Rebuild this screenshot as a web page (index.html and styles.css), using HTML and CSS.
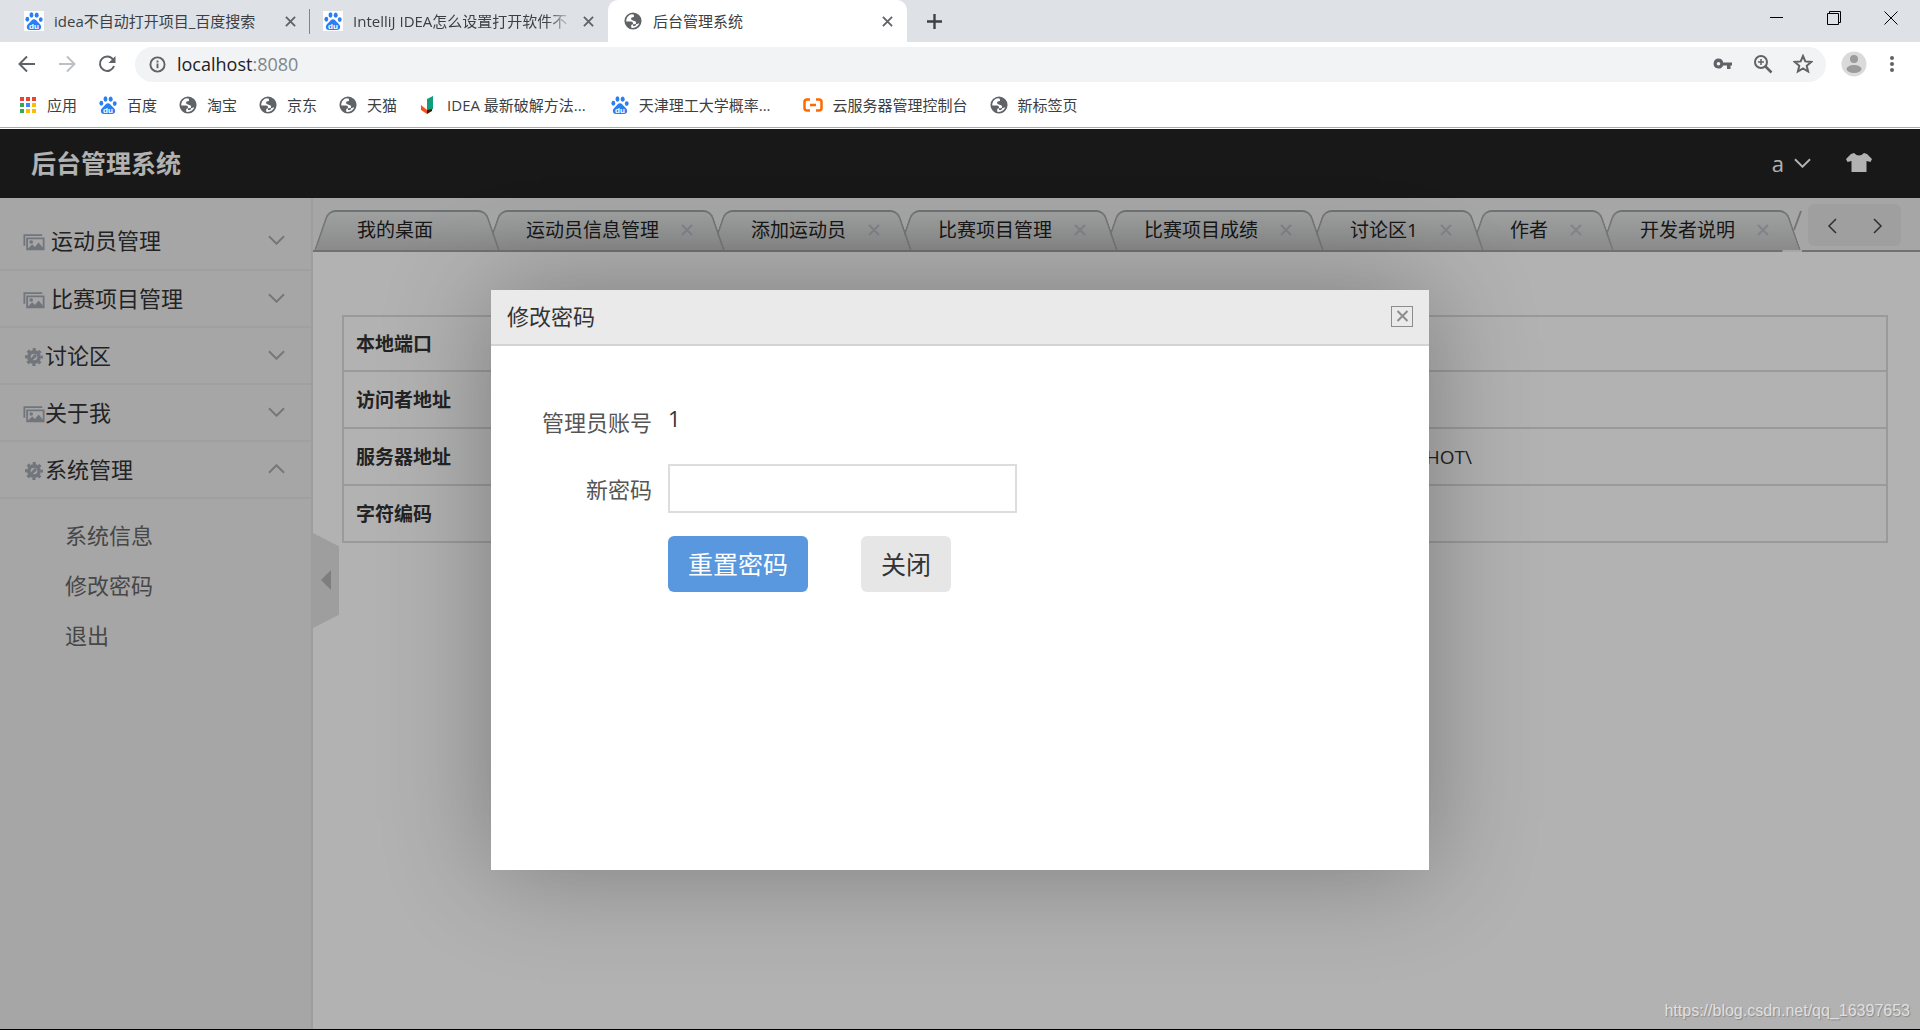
FILE: index.html
```html
<!DOCTYPE html>
<html lang="zh-CN">
<head>
<meta charset="utf-8">
<title>后台管理系统</title>
<link rel="stylesheet" href="styles.css">
</head>
<body>
<svg class="defs" width="0" height="0" aria-hidden="true">
  <symbol id="paw" viewBox="0 0 20 20">
    <g fill="#2b7ff5">
      <ellipse cx="7.2" cy="3.4" rx="2.2" ry="3"/><ellipse cx="13" cy="3.5" rx="2.2" ry="3"/>
      <ellipse cx="2.6" cy="8" rx="2.1" ry="2.7"/><ellipse cx="17.5" cy="8.4" rx="2.1" ry="2.7"/>
      <path d="M10 8c2 0 3 1.6 4.2 3 1.500 1.700 3.800 2.900 3.800 5.500 0 2.400-1.600 3.500-3.600 3.500H5.600C3.600 20 2 18.900 2 16.500c0-2.600 2.300-3.800 3.800-5.500C7 9.600 8 8 10 8z"/>
    </g>
    <text x="10" y="18.500" text-anchor="middle" class="paw-text">du</text>
  </symbol>
  <symbol id="globe" viewBox="0 0 20 20">
    <circle cx="10" cy="10" r="9.500" fill="#5f6368"/>
    <path d="M9 2.500 C4.500 3 2.300 7 2.500 10.500 H8 a2 2 0 0 1 2 2 v1 h2 a1.500 1.500 0 0 0 1.500-1.500 c0-2-2-1.500-3.500-2.500 C8 8.500 7 7.500 8.500 6 l2.500-.5 V3z" fill="#fff"/>
    <path d="M10 13.500 l-2 1 v3 c4 .8 8-1.500 9-5 l-3.500 1 -1 2h-2.500z" fill="#fff"/>
  </symbol>
  <symbol id="cross" viewBox="0 0 12 12"><path d="M1 1 11 11M11 1 1 11" fill="none" stroke="currentColor" stroke-width="2"/></symbol>
  <symbol id="chevron" viewBox="0 0 18 10"><path d="M1 1 9 9 17 1" fill="none" stroke="currentColor" stroke-width="2"/></symbol>
  <symbol id="side" viewBox="0 0 10 16"><path d="M9 1 2 8 9 15" fill="none" stroke="currentColor" stroke-width="1.500"/></symbol>
  <symbol id="pictures" viewBox="0 0 24 18">
    <path d="M1.500 13V1.500H21M4.500 5h18v12h-18z" fill="none" stroke="#a3a9b3" stroke-width="2"/>
    <path d="M5 16.500l5-5 3 3 4-5 5 6v1.500z" fill="#a3a9b3"/><circle cx="9" cy="9" r="2" fill="#a3a9b3"/>
  </symbol>
  <symbol id="gear" viewBox="0 0 20 20">
    <circle cx="10" cy="10" r="5.700" fill="none" stroke="#a3a9b3" stroke-width="4"/>
    <circle cx="10" cy="10" r="8.500" fill="none" stroke="#a3a9b3" stroke-width="3" stroke-dasharray="3.500 3.176" stroke-dashoffset="1.750"/>
    <path d="M6 14l4-4" stroke="#a3a9b3" stroke-width="3"/><circle cx="11" cy="9" r="2" fill="#a3a9b3"/>
  </symbol>
</svg>

<div class="browser">
  <div class="window-tabs">
    <div class="window-tab first"><svg class="fav boxed"><use href="#paw"/></svg><span class="tab-title">idea不自动打开项目_百度搜索</span><button class="tab-x" aria-label="关闭标签页"><svg><use href="#cross"/></svg></button></div>
    <div class="window-tab second"><svg class="fav boxed"><use href="#paw"/></svg><span class="tab-title fade">IntelliJ IDEA怎么设置打开软件不</span><button class="tab-x" aria-label="关闭标签页"><svg><use href="#cross"/></svg></button></div>
    <div class="window-tab current"><svg class="fav"><use href="#globe"/></svg><span class="tab-title">后台管理系统</span><button class="tab-x" aria-label="关闭标签页"><svg><use href="#cross"/></svg></button></div>
    <button class="new-tab" aria-label="新标签页"><svg viewBox="0 0 16 16"><path d="M8 0V16M0 8H16" stroke="#3c4043" stroke-width="2.500"/></svg></button>
    <div class="window-controls">
      <button aria-label="最小化"><svg viewBox="0 0 14 14"><path d="M0 6.500H13" stroke="#000"/></svg></button>
      <button aria-label="还原"><svg viewBox="0 0 14 14"><path d="M.5 2.500h11v11H.5zM2.500 2.500V.5h11v11h-2" fill="none" stroke="#000"/></svg></button>
      <button aria-label="关闭"><svg viewBox="0 0 14 14"><path d="M.5.5 13.500 13.500M13.500.5.5 13.500" stroke="#000"/></svg></button>
    </div>
  </div>
  <div class="toolbar">
    <button aria-label="后退"><svg viewBox="0 0 18 18"><path d="M17 9H2M9 1.500 1.500 9 9 16.500" fill="none" stroke="#5f6368" stroke-width="2"/></svg></button>
    <button aria-label="前进"><svg viewBox="0 0 18 18"><path d="M1 9H16M9 1.500 16.500 9 9 16.500" fill="none" stroke="#bdc1c6" stroke-width="2"/></svg></button>
    <button aria-label="刷新"><svg viewBox="0 0 18 18"><path d="M15 4.500A7.200 7.200 0 1 0 16 11" fill="none" stroke="#5f6368" stroke-width="2"/><path d="M17.500 1v7h-7z" fill="#5f6368"/></svg></button>
    <div class="address">
      <svg class="info" viewBox="0 0 18 18"><circle cx="9" cy="9" r="7.500" fill="none" stroke="#5f6368" stroke-width="2"/><path d="M9 8v5M9 4.800v2" stroke="#5f6368" stroke-width="2"/></svg>
      <span class="url">localhost<span class="port">:8080</span></span>
      <svg class="tool" viewBox="0 0 20 20"><path d="M5.500 4.500a5 5 0 1 0 4.700 7H14V15h3.500v-3.500H19v-3h-8.800a5 5 0 0 0-4.700-4z" fill="#5f6368"/><circle cx="5.500" cy="9.700" r="1.800" fill="#f1f3f4"/></svg>
      <svg class="tool" viewBox="0 0 20 20"><circle cx="8" cy="8" r="6" fill="none" stroke="#5f6368" stroke-width="2"/><path d="M12.500 12.500 18.500 18.500" stroke="#5f6368" stroke-width="2.500"/><path d="M8 5v6M5 8h6" stroke="#5f6368" stroke-width="1.500"/></svg>
      <svg class="tool" viewBox="0 0 20 20"><path d="M10 2l2.300 5.400 5.900.5-4.500 3.900 1.400 5.700-5.100-3-5.100 3 1.400-5.700-4.500-3.900 5.900-.5z" fill="none" stroke="#5f6368" stroke-width="2"/></svg>
    </div>
    <svg class="avatar" viewBox="0 0 26 26"><circle cx="13" cy="13" r="12.500" fill="#dadada"/><circle cx="13" cy="8" r="4" fill="#9b9b9b"/><ellipse cx="13" cy="18" rx="7.500" ry="4" fill="#9b9b9b"/></svg>
    <svg class="dots" viewBox="0 0 6 18"><g fill="#5f6368"><circle cx="3" cy="3" r="2"/><circle cx="3" cy="9" r="2"/><circle cx="3" cy="15" r="2"/></g></svg>
  </div>
  <nav class="bookmarks">
    <a href="#"><svg class="bm" viewBox="0 0 18 18"><g><path fill="#ea4335" d="M1 1h4v4H1zM7 1h4v4H7zM13 1h4v4h-4z"/><path fill="#34a853" d="M1 7h4v4H1zM1 13h4v4H1z"/><path fill="#4285f4" d="M7 7h4v4H7z"/><path fill="#fbbc04" d="M13 7h4v4h-4zM13 13h4v4h-4zM7 13h4v4H7z"/></g></svg>应用</a>
    <a href="#"><svg class="bm"><use href="#paw"/></svg>百度</a>
    <a href="#"><svg class="bm"><use href="#globe"/></svg>淘宝</a>
    <a href="#"><svg class="bm"><use href="#globe"/></svg>京东</a>
    <a href="#"><svg class="bm"><use href="#globe"/></svg>天猫</a>
    <a href="#"><svg class="bm" viewBox="0 0 18 18"><path d="M8 3l6-3v13l-6 3z" fill="#109d7c"/><path d="M2 9l6 5v4l-6-4z" fill="#f4511e"/><path d="M8 14l5-1v2l-5 3z" fill="#3c1d10"/></svg>IDEA 最新破解方法...</a>
    <a href="#" class="wide"><svg class="bm"><use href="#paw"/></svg>天津理工大学概率...</a>
    <a href="#" class="cloud"><svg class="bm" viewBox="0 0 20 14"><path d="M7 1.500H4Q1.500 1.500 1.500 4v6q0 2.500 2.500 2.500h3M13 1.500h3q2.500 0 2.500 2.500v6q0 2.500-2.500 2.500h-3M7 7h6" fill="none" stroke="#ff6a00" stroke-width="2.500"/></svg>云服务器管理控制台</a>
    <a href="#"><svg class="bm"><use href="#globe"/></svg>新标签页</a>
  </nav>
</div>

<div class="app">
  <header class="topbar">
    <h1>后台管理系统</h1>
    <button class="user">a<svg><use href="#chevron"/></svg></button>
    <button class="skin" aria-label="皮肤"><svg viewBox="0 0 26 19"><path d="M8 0 Q13 5 18 0 L21 1 26 6 24.500 9 20.500 8 V19 H5.500 V8 L1.500 9 0 6 5 1z" fill="#fff"/></svg></button>
  </header>
  <div class="body">
    <aside class="sidebar">
      <ul class="menu">
        <li><a href="#"><svg class="ico gap"><use href="#pictures"/></svg>运动员管理<svg class="arrow"><use href="#chevron"/></svg></a></li>
        <li><a href="#"><svg class="ico gap"><use href="#pictures"/></svg>比赛项目管理<svg class="arrow"><use href="#chevron"/></svg></a></li>
        <li><a href="#"><svg class="ico"><use href="#gear"/></svg>讨论区<svg class="arrow"><use href="#chevron"/></svg></a></li>
        <li><a href="#"><svg class="ico"><use href="#pictures"/></svg>关于我<svg class="arrow"><use href="#chevron"/></svg></a></li>
        <li><a href="#"><svg class="ico"><use href="#gear"/></svg>系统管理<svg class="arrow up"><use href="#chevron"/></svg></a></li>
      </ul>
      <ul class="submenu">
        <li><a href="#">系统信息</a></li>
        <li><a href="#">修改密码</a></li>
        <li><a href="#">退出</a></li>
      </ul>
      <button class="collapse" aria-label="收起菜单"></button>
    </aside>
    <main class="main">
      <div class="tabstrip">
        <ul class="tabs">
          <li class="home">我的桌面</li>
          <li>运动员信息管理<svg><use href="#cross"/></svg></li>
          <li>添加运动员<svg><use href="#cross"/></svg></li>
          <li>比赛项目管理<svg><use href="#cross"/></svg></li>
          <li>比赛项目成绩<svg><use href="#cross"/></svg></li>
          <li>讨论区1<svg><use href="#cross"/></svg></li>
          <li>作者<svg><use href="#cross"/></svg></li>
          <li>开发者说明<svg><use href="#cross"/></svg></li>
        </ul>
        <svg class="peek" viewBox="0 0 20 42"><path d="M0 42 15 0H20V42z" fill="#eee"/><path d="M12 20 19 1" stroke="#a8aaaa" stroke-width="2"/></svg>
        <div class="pager">
          <button aria-label="向左"><svg><use href="#side"/></svg></button>
          <button aria-label="向右" class="next"><svg><use href="#side"/></svg></button>
        </div>
      </div>
      <div class="page">
        <table>
          <tr><th scope="row">本地端口</th><td>8080</td></tr>
          <tr><th scope="row">访问者地址</th><td>127.0.0.1</td></tr>
          <tr><th scope="row">服务器地址</th><td><div class="path"><span>C:\Users\dell\Desktop\66\RunnerManager_master\com-xyf-fronts</span><span>0.0.1-SNAPSHOT\</span></div></td></tr>
          <tr><th scope="row">字符编码</th><td>UTF-8</td></tr>
        </table>
      </div>
    </main>
  </div>
  <div class="shade">
    <form class="dialog" role="dialog" aria-labelledby="dialog-title">
      <div class="dialog-head">
        <h2 id="dialog-title">修改密码</h2>
        <button type="button" class="dialog-x" aria-label="关闭"><svg><use href="#cross"/></svg></button>
      </div>
      <div class="dialog-body">
        <span class="label account">管理员账号</span><span class="value">1</span>
        <label class="label" for="pwd">新密码</label><input id="pwd" type="password">
        <div class="actions"><button type="button" class="primary">重置密码</button><button type="button">关闭</button></div>
      </div>
    </form>
  </div>
  <div class="watermark">https://blog.csdn.net/qq_16397653</div>
</div>
</body>
</html>
```
FILE: styles.css
```css
* { box-sizing: border-box; }
body {
  margin: 0;
  min-height: 100vh;
  display: flex;
  flex-direction: column;
  font-family: "Open Sans", "Noto Sans CJK SC", sans-serif;
  font-size: 19px;
  color: #333;
  background: #fff;
  border-bottom: 1px solid #000;
}
button { border: 0; padding: 0; background: none; font: inherit; color: inherit; }
a { color: inherit; text-decoration: none; }
ul { list-style: none; margin: 0; padding: 0; }
h1, h2 { margin: 0; }
svg { display: block; flex: none; }
.defs { position: absolute; }
.paw-text { font: bold 9px "Liberation Sans", sans-serif; fill: #fff; }

/* browser chrome */
.browser { border-bottom: 1px solid #aaa; margin-bottom: 1px; font-size: 15px; }
.window-tabs { display: flex; height: 42px; background: #dee1e6; color: #3c4043; }
.window-tab { display: flex; align-items: center; gap: 10px; width: 299px; padding: 0 14px 0 16px; }
.window-tab.first { width: 310px; padding-left: 25px; position: relative; }
.window-tab.first::after { content: ""; position: absolute; right: 0; top: 9px; height: 25px; border-right: 1px solid #80868b; }
.window-tab.second { width: 298px; padding-left: 14px; }
.window-tab.current { background: #fff; border-radius: 10px 10px 0 0; }
.fav { width: 18px; height: 18px; }
.boxed { background: #fff; outline: 1px solid #fff; }
.tab-title { flex: 1; margin-left: 1px; white-space: nowrap; overflow: hidden; line-height: 24px; }
.fade { -webkit-mask-image: linear-gradient(90deg, #000 88%, transparent); mask-image: linear-gradient(90deg, #000 88%, transparent); }
.tab-x svg { width: 11px; height: 11px; color: #5f6368; }
.new-tab { margin-left: 20px; }
.new-tab svg { width: 15px; height: 15px; }
.window-controls { display: flex; gap: 43px; margin-left: auto; padding: 0 22px 6px 0; }
.window-controls svg { width: 14px; height: 14px; }
.toolbar { display: flex; align-items: center; gap: 22px; height: 45px; padding: 0 25px 1px 18px; }
.toolbar button svg { width: 18px; height: 18px; }
.address { flex: 1; display: flex; align-items: center; gap: 20px; height: 35px; margin: 0 -7px 0 -3px; padding: 0 13px 0 14px; border-radius: 18px; background: #f1f3f4; }
.info { width: 17px; height: 17px; }
.url { flex: 1; margin-left: -9px; font-size: 18px; line-height: 24px; color: #202124; }
.port { color: #80868b; }
.tool { width: 20px; height: 20px; }
.avatar { width: 26px; height: 26px; }
.dots { width: 6px; height: 18px; }
.bookmarks { display: flex; gap: 22px; height: 40px; padding: 0 20px 4px 19px; color: #3c4043; }
.bookmarks a { display: flex; align-items: center; gap: 10px; line-height: 20px; white-space: nowrap; }
.bm { width: 18px; height: 18px; }
.wide { margin-left: 3px; }
.cloud { margin-left: 10px; }
.cloud .bm { width: 20px; }

/* application */
.app { flex: 1; display: flex; flex-direction: column; position: relative; }
.topbar { display: flex; align-items: center; height: 69px; padding: 0 48px 2px 31px; background: #232323; color: #fff; }
.topbar h1 { flex: 1; font-size: 25px; line-height: 36px; }
.user { display: flex; align-items: center; gap: 10px; font-size: 22px; line-height: 30px; }
.user svg { width: 17px; height: 10px; }
.skin { margin-left: 35px; }
.skin svg { width: 26px; height: 19px; }
.body { flex: 1; display: flex; }
.sidebar { position: relative; width: 313px; padding-top: 14px; background: #eee; border-right: 2px solid #e2e2e2; font-size: 22px; }
.menu a { display: flex; align-items: center; height: 57px; padding: 0 26px 2px 23px; border-bottom: 2px solid #e5e5e5; line-height: 32px; }
.menu li:first-child a { height: 59px; }
.ico { width: 22px; height: 18px; margin-top: 4px; }
.gap { margin-right: 6px; }
.arrow { width: 17px; height: 10px; margin-left: auto; color: #aaa; }
.up { transform: rotate(180deg); }
.submenu { padding: 11px 0 0 65px; color: #666; }
.submenu a { display: block; line-height: 50px; }
.collapse { position: absolute; left: 313px; top: 335px; width: 26px; height: 95px; background: #e3e3e3; clip-path: polygon(0 0, 100% 14%, 100% 86%, 0 100%); }
.collapse::before { content: ""; position: absolute; left: 8px; top: 37px; border: 10px solid transparent; border-right-color: #b5b5b5; border-left: 0; }
.main { flex: 1; min-width: 0; }
.tabstrip { display: flex; height: 54px; background: #eee; border-bottom: 2px solid #a3a3a3; }
.tabs { display: flex; align-items: flex-end; padding-left: 8px; color: #222; }
.tabs li { position: relative; z-index: 1; display: flex; align-items: center; gap: 22px; height: 40px; padding: 0 25px 0 33px; line-height: 28px; white-space: nowrap; }
.tabs li.home { padding: 0 60px 0 36px; }
.tabs li:nth-child(1) { z-index: 9; }
.tabs li:nth-child(2) { z-index: 8; }
.tabs li:nth-child(3) { z-index: 7; }
.tabs li:nth-child(4) { z-index: 6; }
.tabs li:nth-child(5) { z-index: 5; }
.tabs li:nth-child(6) { z-index: 4; }
.tabs li:nth-child(7) { z-index: 3; }
.tabs li:nth-child(8) { z-index: 2; }
.tabs li::before, .tabs li::after { content: ""; position: absolute; z-index: -1; top: 0; bottom: 0; border-top: 2px solid #a0a4a4; background: linear-gradient(#e4e7e7, #c6c6c6); }
.tabs li::before { left: 0; right: 40%; border-left: 2px solid #a8aaaa; border-radius: 8px 0 0 0; transform: skewX(-19deg); }
.tabs li::after { left: 40%; right: 0; border-right: 2px solid #a8aaaa; border-radius: 0 8px 0 0; transform: skewX(19deg); }
.tabs svg { width: 12px; height: 12px; color: #b8bcc4; }
.peek { width: 20px; height: 42px; margin: 12px 0 0 -12px; }
.pager { display: flex; align-items: center; justify-content: space-between; width: 93px; height: 42px; margin: 6px 19px 0 auto; padding: 2px 18px 0 19px; border-radius: 6px; background: #e4e4e4; }
.pager svg { width: 10px; height: 16px; color: #444; }
.next { transform: scaleX(-1); }
.page { padding: 63px 32px 0 29px; }
table { width: 100%; border-collapse: collapse; border: 2px solid #ddd; }
tr { height: 57px; border-bottom: 2px solid #ddd; }
tr:first-child { height: 55px; }
th, td { padding: 0 13px 0 12px; text-align: left; line-height: 28px; }
th { width: 172px; }
.path { display: flex; justify-content: space-between; max-width: 945px; }

/* dialog over the page */
.shade { position: absolute; inset: 0; z-index: 20; display: flex; align-items: center; justify-content: center; padding-top: 2px; background: rgba(0, 0, 0, .3); }
.dialog { width: 938px; height: 580px; background: #fff; box-shadow: 0 0 100px rgba(0, 0, 0, .3); }
.dialog-head { display: flex; align-items: center; justify-content: space-between; height: 56px; padding: 0 16px 2px; background: #eaeaea; border-bottom: 2px solid #d4d4d4; }
.dialog-head h2 { font-size: 22px; font-weight: normal; line-height: 30px; }
.dialog-x { display: grid; place-items: center; width: 22px; height: 21px; border: 1px solid #8c8c8c; color: #8c8c8c; }
.dialog-x svg { width: 13px; height: 12px; }
.dialog-body { display: grid; grid-template-columns: 145px 1fr; gap: 23px 16px; align-items: center; padding: 52px 16px; font-size: 22px; line-height: 32px; }
.label { text-align: right; color: #555; }
.account { padding: 8px 0 3px; }
.value { padding-bottom: 3px; }
.dialog-body input { width: 349px; height: 49px; border: 2px solid #ddd; background: #fff; font: inherit; padding: 0 12px; }
.actions { grid-column: 2; display: flex; gap: 53px; }
.actions button { height: 56px; padding: 0 20px; border-radius: 6px; background: #e6e6e6; font-size: 25px; }
.actions .primary { background: #5998de; color: #fff; }
.watermark { position: absolute; right: 10px; bottom: 7px; z-index: 30; font: 16px/22px "Liberation Sans", sans-serif; color: #e0e0e0; text-shadow: 1px 1px 1px #888; }
```
